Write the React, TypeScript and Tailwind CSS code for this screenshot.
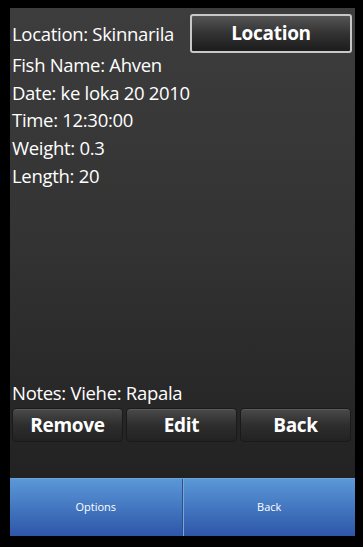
import React from "react";

const font = { fontFamily: '"Open Sans", "Noto Sans", sans-serif' };

function Row({ children }: { children: React.ReactNode }) {
  return <div className="h-[27.7px] flex items-center text-[18.5px] text-white tracking-[-0.3px]">{children}</div>;
}

function Btn({ label }: { label: string }) {
  return (
    <div className="flex-1 h-[34px] rounded-[4px] border border-[#1a1a1a] bg-gradient-to-b from-[#4a4a4a] via-[#2e2e2e] to-[#222] flex items-center justify-center text-white text-[19px] font-bold tracking-[-0.3px] shadow-[inset_0_1px_0_#5a5a5a]">
      {label}
    </div>
  );
}

export default function App() {
  return (
    <div className="w-[363px] h-[547px] bg-black pt-[8px] pl-[10px] pr-[8px]" style={font}>
      <div className="h-[470px] bg-gradient-to-b from-[#3d3d3d] via-[#333] to-[#222] flex flex-col px-[2px]">
        <div className="flex items-center h-[50px] pt-[1px]">
          <div className="flex-1 text-[18.5px] text-white tracking-[-0.3px]">Location: Skinnarila</div>
          <div className="w-[162px] h-[39px] mr-[1px] rounded-[3px] border-[2px] border-[#c8c8c8] bg-gradient-to-b from-[#555] via-[#333] to-[#1c1c1c] flex items-center justify-center text-white font-bold text-[19px] tracking-[-0.3px]">
            Location
          </div>
        </div>
        <div className="flex flex-col -mt-[7px]">
          <Row>Fish Name: Ahven</Row>
          <Row>Date: ke loka 20 2010</Row>
          <Row>Time: 12:30:00</Row>
          <Row>Weight: 0.3</Row>
          <Row>Length: 20</Row>
        </div>
        <div className="flex-1" />
        <Row>Notes: Viehe: Rapala</Row>
        <div className="flex gap-[3px] mt-[1px] pr-[2px]">
          <Btn label="Remove" />
          <Btn label="Edit" />
          <Btn label="Back" />
        </div>
        <div className="h-[36px]" />
      </div>
      <div className="h-[58px] flex border-t border-[#6aa0dc] text-white text-[11px]">
        <div className="flex-1 flex items-center justify-center bg-gradient-to-b from-[#5b98d8] to-[#2e56a8] border-r border-[#2f4f86]">Options</div>
        <div className="flex-1 flex items-center justify-center bg-gradient-to-b from-[#5b98d8] to-[#2e56a8] border-l border-[#7aa6dc]">Back</div>
      </div>
    </div>
  );
}
